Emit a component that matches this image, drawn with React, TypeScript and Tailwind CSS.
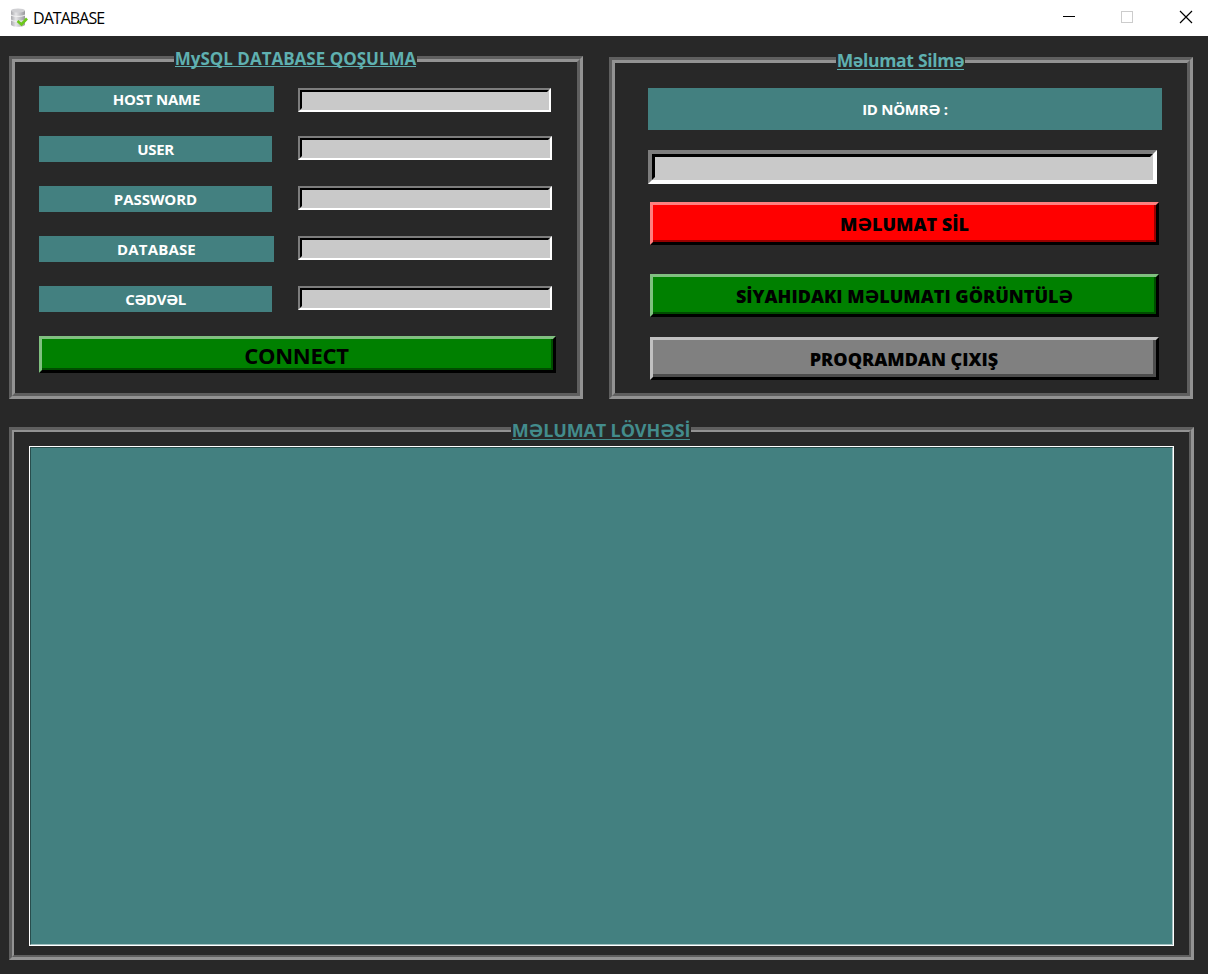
import type { ReactNode } from "react";

const fields = [
  { name: "HOST NAME", label: "w-[235px]", text: "tracking-[-0.2px]", input: "w-[253px] mt-[2px]" },
  { name: "USER", label: "w-[233px]", text: "tracking-[-0.3px]", input: "w-[254px]" },
  { name: "PASSWORD", label: "w-[233px]", text: "tracking-[-0.05px]", input: "w-[254px]" },
  { name: "DATABASE", label: "w-[235px]", text: "tracking-[0.15px]", input: "w-[254px]" },
  { name: "CƏDVƏL", label: "w-[233px]", text: "tracking-[-0.45px]", input: "w-[254px]" },
];

function Title({ className, children }: { className: string; children: ReactNode }) {
  return (
    <h2 className={`absolute flex justify-center whitespace-nowrap bg-[#282828] font-bold ${className}`}>
      {children}
    </h2>
  );
}

function TitleBar() {
  return (
    <header className="flex h-9 items-center bg-white text-black">
      <svg className="ml-[9px] h-5 w-5" viewBox="0 0 20 20">
        <defs>
          <linearGradient id="metal" x1="0" x2="1">
            <stop offset="0" stopColor="#a8a8ac" />
            <stop offset="0.35" stopColor="#e6e6e8" />
            <stop offset="1" stopColor="#98989c" />
          </linearGradient>
        </defs>
        <path d="M2 2.500v14c0 3 14 3 14 0v-14z" fill="url(#metal)" />
        <ellipse cx="9" cy="2.500" rx="7" ry="2" fill="#d0d0d3" />
        <path d="M2 7c2 1.800 12 1.800 14 0M2 12c2 1.800 12 1.800 14 0" fill="none" stroke="#f6f6f6" strokeWidth="1" />
        <path d="M8.500 13l4 3.500L18 10.500" fill="none" stroke="#6cc81a" strokeWidth="2.600" />
      </svg>
      <span className="ml-1 text-[16px] leading-5 tracking-[-0.95px]">DATABASE</span>
      <svg className="ml-auto h-9 w-[168px]" viewBox="0 0 168 36" fill="none" shapeRendering="crispEdges">
        <path d="M23 16.500h12" stroke="#000" />
        <path d="M81.500 11.500h11v11h-11z" stroke="#ccc" />
        <path d="M140 11l12 12M152 11l-12 12" stroke="#000" strokeWidth="1.200" shapeRendering="auto" />
      </svg>
    </header>
  );
}

export default function App() {
  return (
    <div className="flex h-[974px] w-[1208px] flex-col overflow-hidden bg-[#282828] font-['Open_Sans','Noto_Sans',sans-serif]">
      <TitleBar />
      <main className="flex flex-col pl-[9px] pt-5">
        <div className="flex gap-[26px]">
          <section className="relative h-[343px] w-[574px] border-[3px] border-b-[#939393] border-l-[#5f5f5f] border-r-[#939393] border-t-[#5f5f5f]">
            <Title className="left-[162px] top-[-10px] h-[20px] w-[243px] text-[17px] leading-[20px] text-[#5fb0b0]">
              <span className="h-[18px] border-b border-current">MySQL DATABASE QOŞULMA</span>
            </Title>
            <div className="h-full border-[3px] border-b-[#5f5f5f] border-l-[#939393] border-r-[#5f5f5f] border-t-[#939393] pl-6 pt-6">
              <div className="flex flex-col gap-6">
                {fields.map((f) => (
                  <div key={f.name} className="flex h-[26px]">
                    <div className="w-[259px]">
                      <div className={`flex h-[26px] items-center justify-center bg-[#438080] pt-px text-[15px] font-bold text-white ${f.label} ${f.text}`}>
                        {f.name}
                      </div>
                    </div>
                    <div className={`h-6 border-2 border-b-white border-l-[#7d7d7d] border-r-white border-t-[#7d7d7d] ${f.input}`}>
                      <input className="block h-5 w-full border-2 border-b-[#c9c9c9] border-l-black border-r-[#c9c9c9] border-t-black bg-[#c9c9c9] outline-none" />
                    </div>
                  </div>
                ))}
              </div>
              <button className="mt-6 block h-[37px] w-[517px] border-[3px] border-b-black border-l-[#80c080] border-r-black border-t-[#80c080]">
                <span className="flex h-full items-center justify-center border-b-2 border-r-2 border-[#004d00] bg-[#008000] pt-[2px] text-[22px] font-bold leading-none tracking-[-0.25px] text-black">
                  CONNECT
                </span>
              </button>
            </div>
          </section>

          <section className="relative mt-px h-[342px] w-[584px] border-[3px] border-b-[#939393] border-l-[#5f5f5f] border-r-[#939393] border-t-[#5f5f5f]">
            <Title className="left-[224px] top-[-10px] h-[21px] w-[129px] text-[17.500px] leading-[21px] tracking-[-0.300px] text-[#5fb0b0]">
              <span className="h-[20px] border-b border-current">Məlumat Silmə</span>
            </Title>
            <div className="h-full border-[3px] border-b-[#5f5f5f] border-l-[#939393] border-r-[#5f5f5f] border-t-[#939393] pl-[33px] pt-[25px]">
              <div className="flex h-[42px] w-[514px] items-center justify-center bg-[#438080] pt-px text-[15px] font-bold tracking-[-0.3px] text-white">
                ID NÖMRƏ :
              </div>
              <div className="mt-5 h-[34px] w-[509px] border-4 border-b-white border-l-[#7d7d7d] border-r-white border-t-[#7d7d7d]">
                <input className="block h-[26px] w-full border-[3px] border-b-[#c9c9c9] border-l-black border-r-[#c9c9c9] border-t-black bg-[#c9c9c9] outline-none" />
              </div>
              <button className="ml-[2px] mt-[18px] block h-[43px] w-[509px] border-[3px] border-b-black border-l-[#ff8080] border-r-black border-t-[#ff8080]">
                <span className="flex h-full items-center justify-center border-b-2 border-r-2 border-[#990000] bg-[#ff0000] pl-[2px] pt-[2px] text-[18px] font-extrabold leading-none text-black">
                  MƏLUMAT SİL
                </span>
              </button>
              <button className="ml-[2px] mt-[29px] block h-[43px] w-[509px] border-[3px] border-b-black border-l-[#80c080] border-r-black border-t-[#80c080]">
                <span className="flex h-full items-center justify-center border-b-2 border-r-2 border-[#004d00] bg-[#008000] pl-[2px] pt-[2px] text-[18px] font-extrabold leading-none text-black">
                  SİYAHIDAKI MƏLUMATI GÖRÜNTÜLƏ
                </span>
              </button>
              <button className="ml-[2px] mt-5 block h-[43px] w-[509px] border-[3px] border-b-black border-l-[#c0c0c0] border-r-black border-t-[#c0c0c0]">
                <span className="flex h-full items-center justify-center border-b-[3px] border-r-[3px] border-[#4d4d4d] bg-[#808080] pl-[2px] pt-[4px] text-[18px] font-extrabold leading-none text-black">
                  PROQRAMDAN ÇIXIŞ
                </span>
              </button>
            </div>
          </section>
        </div>

        <section className="relative mt-7 h-[533px] w-[1185px] border-[3px] border-b-[#939393] border-l-[#5f5f5f] border-r-[#939393] border-t-[#5f5f5f]">
          <Title className="left-[499px] top-[-10px] h-[20px] w-[180px] text-[18px] leading-[20px] tracking-[-0.13px] text-[#438c8c]">
            <span className="h-[20px] border-b border-current">MƏLUMAT LÖVHƏSİ</span>
          </Title>
          <div className="h-full border-2 border-b-[#5f5f5f] border-l-[#939393] border-r-[#5f5f5f] border-t-[#939393] pl-[15px] pt-[14px]">
            <div className="h-[500px] w-[1145px] border border-white">
              <div className="h-full border border-b-[#a1bfbf] border-l-[#284d4d] border-r-[#a1bfbf] border-t-[#284d4d] bg-[#438080]" />
            </div>
          </div>
        </section>
      </main>
    </div>
  );
}
